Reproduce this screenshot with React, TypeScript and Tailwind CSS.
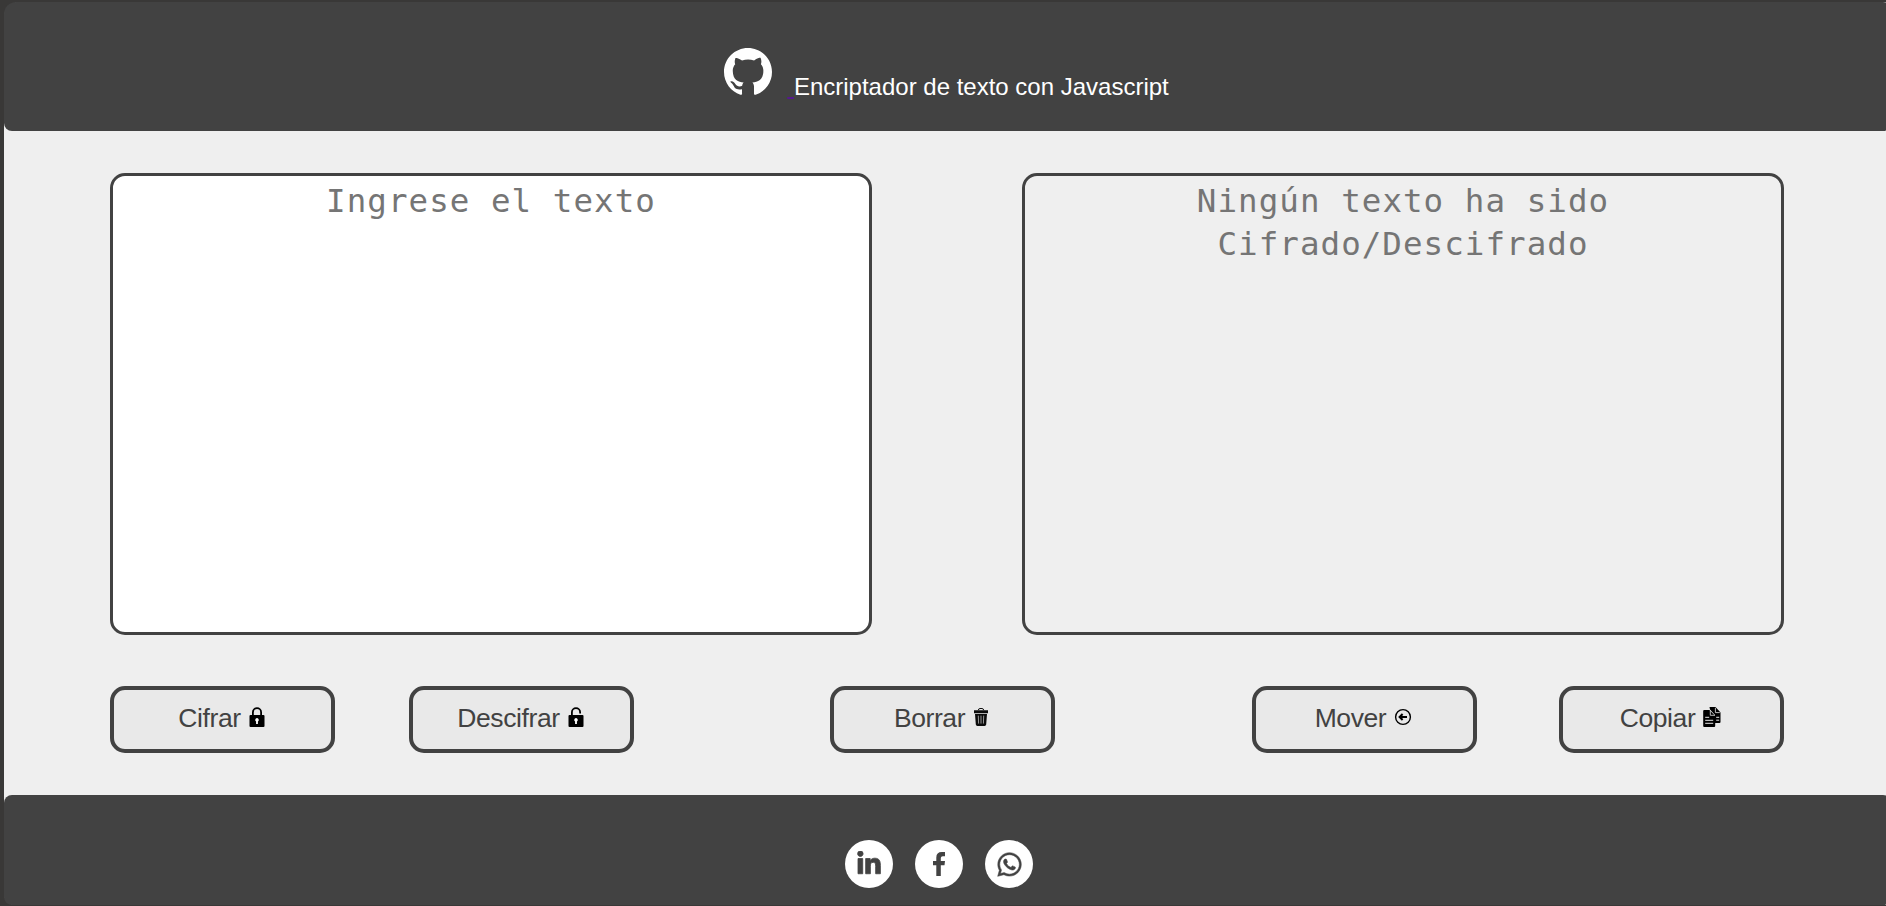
import type { ReactNode } from "react";
import { FaLinkedinIn, FaWhatsapp } from "react-icons/fa";

function GithubLogo() {
  return (
    <svg viewBox="0 0 16 16" className="h-12 w-12 fill-white">
      <path d="M8 0C3.58 0 0 3.58 0 8c0 3.54 2.29 6.53 5.47 7.59.4.07.55-.17.55-.38 0-.19-.01-.82-.01-1.49-2.01.37-2.53-.49-2.69-.94-.09-.23-.48-.94-.82-1.13-.28-.15-.68-.52-.01-.53.63-.01 1.08.58 1.23.82.72 1.21 1.87.87 2.33.66.07-.52.28-.87.51-1.07-1.78-.2-3.64-.89-3.64-3.95 0-.87.31-1.59.82-2.15-.08-.2-.36-1.02.08-2.12 0 0 .67-.21 2.2.82.64-.18 1.32-.27 2-.27s1.36.09 2 .27c1.53-1.04 2.2-.82 2.2-.82.44 1.1.16 1.92.08 2.12.51.56.82 1.27.82 2.15 0 3.07-1.87 3.75-3.65 3.95.29.25.54.73.54 1.48 0 1.07-.01 1.93-.01 2.2 0 .21.15.46.55.38A8.01 8.01 0 0 0 16 8c0-4.42-3.58-8-8-8z" />
    </svg>
  );
}

function LockIcon({ open = false }: { open?: boolean }) {
  return (
    <svg viewBox="0 0 16 20" className="h-5 w-4 shrink-0">
      <path
        d={open ? "M3.9 9V5.2a4.1 4.1 0 0 1 8.2 0v1.2" : "M3.9 9V5.2a4.1 4.1 0 0 1 8.2 0V9"}
        fill="none"
        stroke="#000"
        strokeWidth="1.8"
      />
      <rect x="0.500" y="8" width="15" height="12" rx="1" />
      <path d="M8 11a1.9 1.9 0 0 0-.9 3.5V17h1.8v-2.5A1.9 1.9 0 0 0 8 11z" fill="#fff" />
    </svg>
  );
}

function TrashIcon() {
  return (
    <svg viewBox="0 0 16 20" className="h-5 w-4 shrink-0">
      <path d="M5.2 3.2Q5.2 1.4 8 1.4t2.8 1.8" fill="none" stroke="#111" strokeWidth="1" />
      <path d="M1 3.3h14v2.9H1zM2 7h12l-.8 10.6q-.2 1.4-1.6 1.4H4.4q-1.4 0-1.6-1.4z" fill="#0c0c0c" />
      <path d="M5.3 8.6l.3 8M8 8.6v8M10.7 8.6l-.3 8" stroke="#999" strokeWidth="1" />
    </svg>
  );
}

function MoveIcon() {
  return (
    <svg viewBox="0 0 18 20" className="h-5 w-[18px] shrink-0" fill="none" stroke="#000">
      <circle cx="9" cy="10" r="7.4" strokeWidth="1.4" />
      <path d="M13 10H6M8.6 7L5.6 10l3 3" strokeWidth="2" />
    </svg>
  );
}

function CopyIcon() {
  return (
    <svg viewBox="0 0 18 20" className="h-5 w-[18px] shrink-0">
      <path d="M6.5 0h6l5 5.500V15a1 1 0 0 1-1 1H12V8L7 2.6z" />
      <path d="M1.2 3H6.5L12.2 9v10q0 1-1 1H1.2q-1 0-1-1V4q0-1 1-1z" />
      <path d="M7.3 3.3v5h4.6M12.4.8v4.800h4.4" fill="none" stroke="#e9e9e9" strokeWidth=".8" />
      <path d="M2.2 10.300h4M2.2 13.300h8M2.2 16.300h8M13.200 10.300h3M13.200 13.200h3" stroke="#e9e9e9" strokeWidth="1" />
    </svg>
  );
}

function FacebookIcon() {
  return (
    <svg viewBox="0 0 12 24" className="h-6 w-3 fill-[#424242]">
      <path d="M12 0v4.300H9.800q-2 0-2 1.700v3H12l-.5 4.300H7.800V24H3.300V13.300H0V9h3.300V5.500Q3.300 0 8.800 0z" />
    </svg>
  );
}

function ActionButton({ label, children }: { label: string; children: ReactNode }) {
  return (
    <button className="flex h-[67px] w-[225px] items-center justify-center gap-2 rounded-[15px] border-4 border-[#424242] bg-[#e9e9e9] pr-[2px] pb-[2px] text-[26.5px] leading-none tracking-[-0.4px] text-[#424242]">
      <span>{label}</span>
      <span className="flex pb-[3px]">{children}</span>
    </button>
  );
}

function SocialLink({ label, children }: { label: string; children: ReactNode }) {
  return (
    <a href="#" aria-label={label} className="flex h-12 w-12 items-center justify-center rounded-full bg-white text-[#424242]">
      {children}
    </a>
  );
}

const areaClass =
  "h-[462px] w-[762px] resize-none rounded-[15px] border-3 border-[#424242] px-20 py-1 text-center font-['DejaVu_Sans_Mono',monospace] text-[32.5px] leading-[43px] tracking-[1.05px] placeholder:text-[#757575] placeholder:opacity-100";

export default function App() {
  return (
    <div className="h-[906px] w-full overflow-hidden bg-[#393837] pt-[2px] pl-1 font-['Liberation_Sans',Arial,sans-serif]">
      <div className="flex h-[903px] flex-col rounded-tl-[16px] rounded-bl-[12px] bg-[#efefef]">
        <header className="-mr-[5px] flex h-[129px] shrink-0 items-start justify-center rounded-[8px] rounded-tl-[12px] bg-[#424242] pt-[46px] pr-[2px]">
          <GithubLogo />
          <a href="#" className="ml-[15px] pt-[25px] text-2xl leading-7 whitespace-pre text-[#551a8b] underline"> </a>
          <h1 className="pt-[25px] text-2xl leading-7 text-white">Encriptador de texto con Javascript</h1>
        </header>
        <main className="flex h-[664px] shrink-0 flex-col pt-[42px] pr-[102px] pl-[106px]">
          <div className="flex justify-between">
            <textarea className={`${areaClass} bg-white`} placeholder="Ingrese el texto" />
            <textarea className={`${areaClass} bg-[#efefef]`} placeholder="Ningún texto ha sido Cifrado/Descifrado" disabled />
          </div>
          <div className="mt-[51px] flex">
            <div className="flex gap-[74px]">
              <ActionButton label="Cifrar"><LockIcon /></ActionButton>
              <ActionButton label="Descifrar"><LockIcon open /></ActionButton>
            </div>
            <div className="mr-[197px] ml-[196px]">
              <ActionButton label="Borrar"><TrashIcon /></ActionButton>
            </div>
            <div className="flex gap-[82px]">
              <ActionButton label="Mover"><MoveIcon /></ActionButton>
              <ActionButton label="Copiar"><CopyIcon /></ActionButton>
            </div>
          </div>
        </main>
        <footer className="-mr-[5px] flex flex-1 justify-center gap-[22px] rounded-[8px] bg-[#424242] pt-[45px] pr-[17px]">
          <SocialLink label="LinkedIn"><FaLinkedinIn size={26} stroke="#424242" strokeWidth={16} /></SocialLink>
          <SocialLink label="Facebook"><FacebookIcon /></SocialLink>
          <SocialLink label="WhatsApp"><FaWhatsapp size={27} stroke="#424242" strokeWidth={10} /></SocialLink>
        </footer>
      </div>
    </div>
  );
}
